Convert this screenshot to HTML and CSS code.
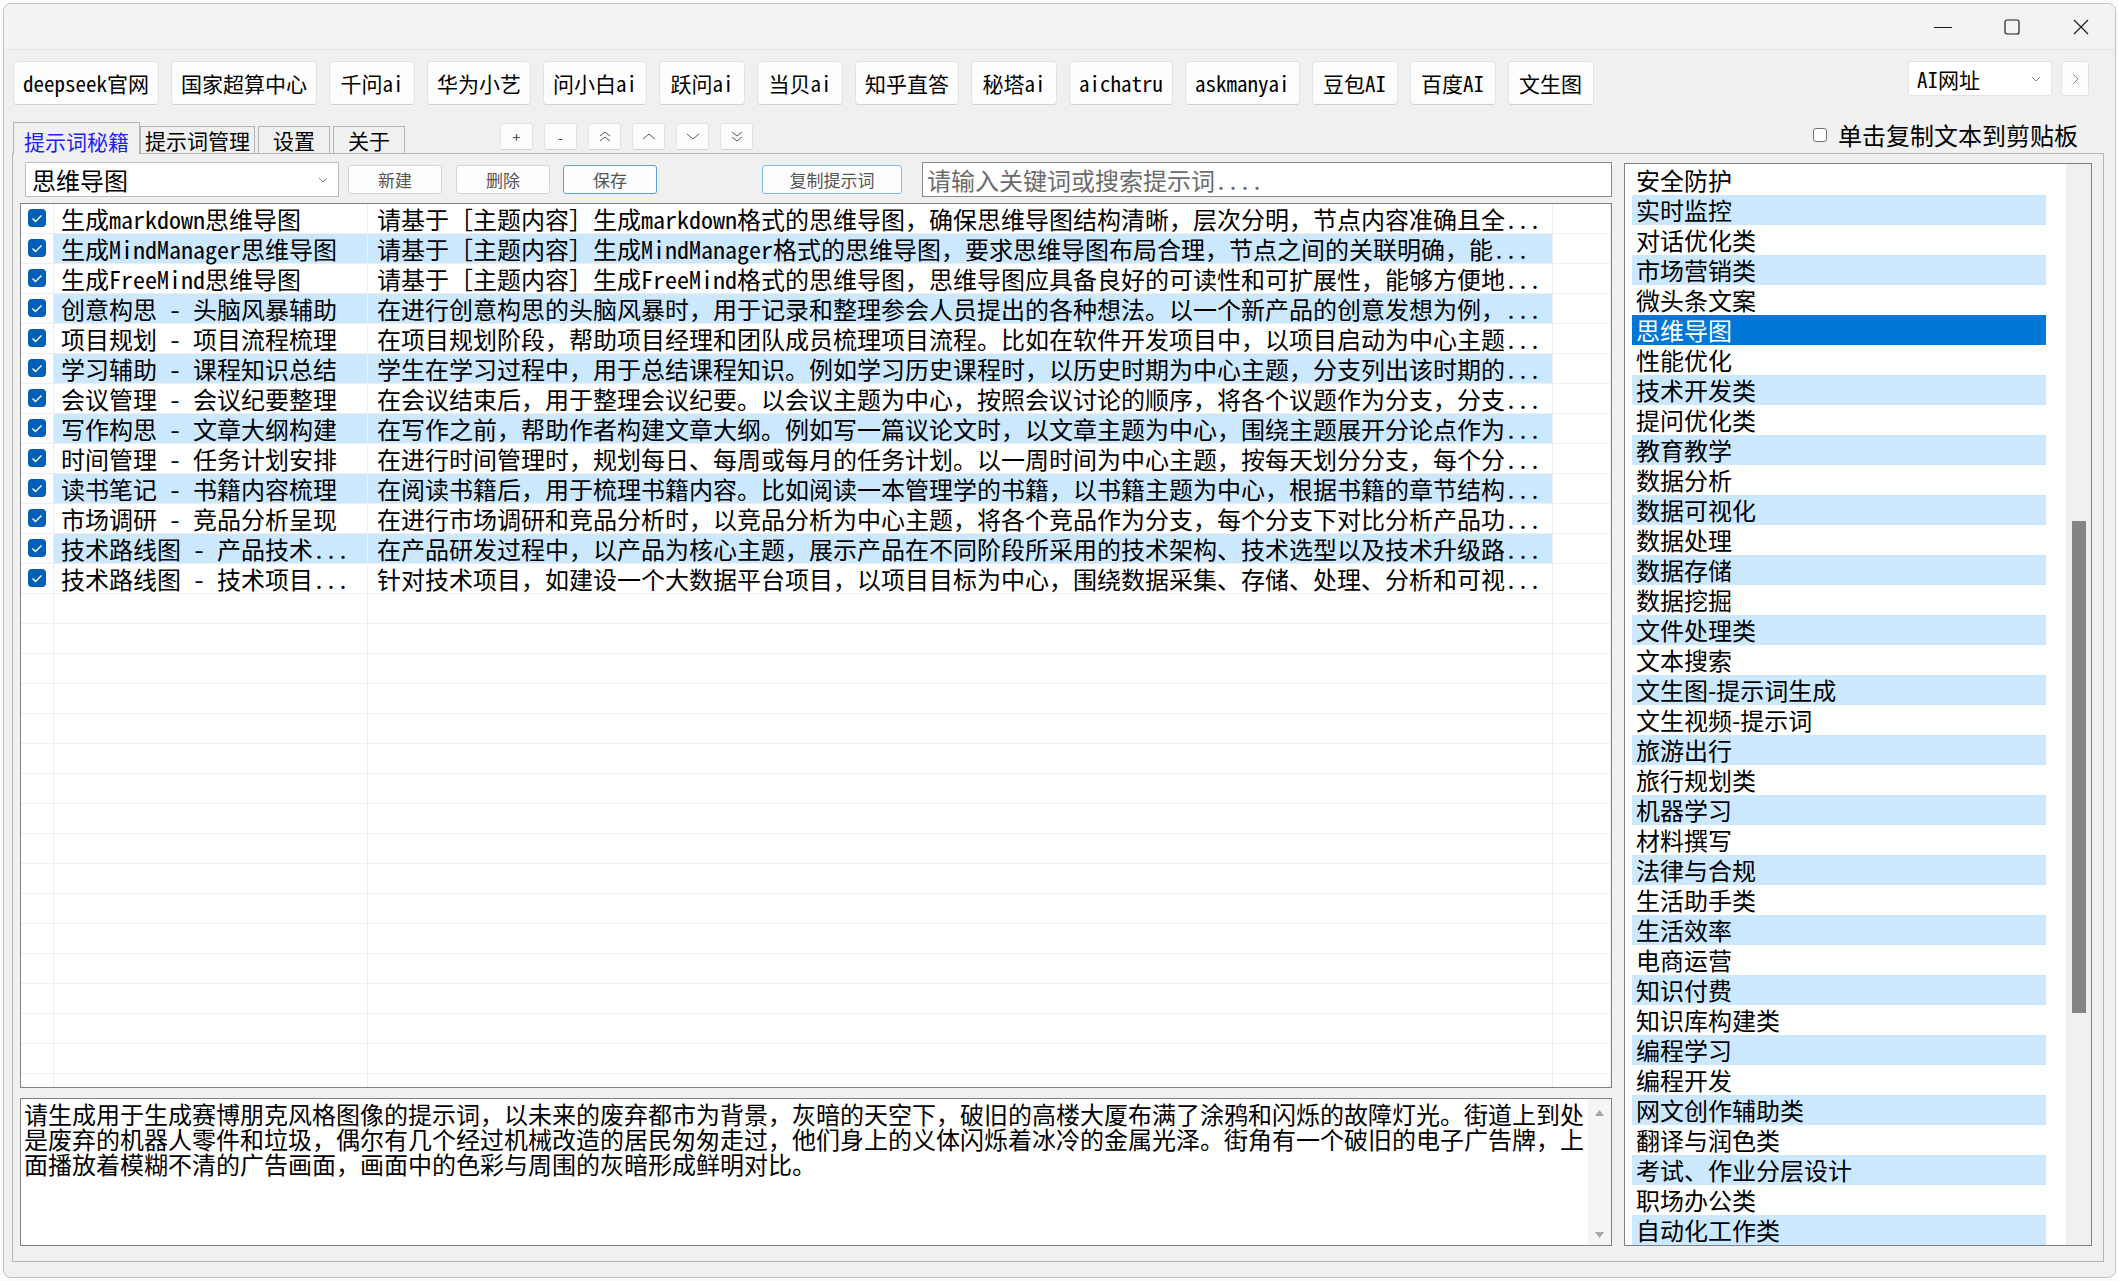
FILE: index.html
```html
<!DOCTYPE html>
<html lang="zh-CN">
<head>
    <meta charset="UTF-8">
    <meta name="viewport" content="width=device-width, initial-scale=1.0">
    <title>提示词秘籍</title>
    <link rel="stylesheet" href="styles.css">
</head>
<body>

<div class="window">

    <div class="titlebar">
        <span class="ctl"><svg width="20" height="16" viewBox="0 0 20 16"><line x1="1" y1="8.5" x2="19" y2="8.5" stroke="#1b1b1b" stroke-width="1.2"/></svg></span>
        <span class="ctl"><svg width="16" height="16" viewBox="0 0 16 16"><rect x="1" y="1" width="14" height="14" rx="2" fill="none" stroke="#1b1b1b" stroke-width="1.2"/></svg></span>
        <span class="ctl"><svg width="16" height="16" viewBox="0 0 16 16"><path d="M1 1L15 15M15 1L1 15" stroke="#1b1b1b" stroke-width="1.2"/></svg></span>
    </div>

    <div class="content">

        <div class="linkbar">
            <button class="site">deepseek官网</button>
            <button class="site">国家超算中心</button>
            <button class="site">千问ai</button>
            <button class="site">华为小艺</button>
            <button class="site">问小白ai</button>
            <button class="site">跃问ai</button>
            <button class="site">当贝ai</button>
            <button class="site">知乎直答</button>
            <button class="site">秘塔ai</button>
            <button class="site">aichatru</button>
            <button class="site">askmanyai</button>
            <button class="site">豆包AI</button>
            <button class="site">百度AI</button>
            <button class="site">文生图</button>

            <div class="site-pick">
                <div class="site-select">
                    <span>AI网址</span>
                    <svg width="10" height="6" viewBox="0 0 10 6"><path d="M1 1L5 5L9 1" fill="none" stroke="#8a8a8a"/></svg>
                </div>
                <button class="go"><svg width="7" height="12" viewBox="0 0 7 12"><path d="M1 1L6 6L1 11" fill="none" stroke="#8a8a8a"/></svg></button>
            </div>
        </div>

        <div class="tabrow">
            <div class="tabs">
                <span class="tab active">提示词秘籍</span>
                <span class="tab wide">提示词管理</span>
                <span class="tab">设置</span>
                <span class="tab">关于</span>
            </div>

            <div class="movebtns">
                <button class="mv">+</button>
                <button class="mv">-</button>
                <button class="mv"><svg width="12" height="11" viewBox="0 0 12 11"><path d="M1 5L6 1L11 5M1 10L6 6L11 10" fill="none" stroke="#555"/></svg></button>
                <button class="mv"><svg width="14" height="7" viewBox="0 0 14 7"><path d="M1 6L7 1L13 6" fill="none" stroke="#555"/></svg></button>
                <button class="mv"><svg width="14" height="7" viewBox="0 0 14 7"><path d="M1 1L7 6L13 1" fill="none" stroke="#555"/></svg></button>
                <button class="mv"><svg width="12" height="11" viewBox="0 0 12 11"><path d="M1 1L6 5L11 1M1 6L6 10L11 6" fill="none" stroke="#555"/></svg></button>
            </div>

            <label class="copyopt"><span class="tick"></span>单击复制文本到剪贴板</label>
        </div>

        <div class="panel">

            <div class="leftcol">
                <div class="toolrow">
                    <div class="combo">
                        <span>思维导图</span>
                        <svg width="10" height="6" viewBox="0 0 10 6"><path d="M1 1L5 5L9 1" fill="none" stroke="#8a8a8a"/></svg>
                    </div>
                    <button class="btn b-new">新建</button>
                    <button class="btn b-del">删除</button>
                    <button class="btn b-save">保存</button>
                    <button class="btn b-copy">复制提示词</button>
                    <input class="search" type="text" placeholder="请输入关键词或搜索提示词....">
                </div>

                <div class="grid">
                    <table>
                        <colgroup>
                            <col style="width:33px">
                            <col style="width:314px">
                            <col style="width:1185px">
                            <col>
                        </colgroup>
                        <tr><td class="c"><span class="chk"></span></td><td class="name">生成markdown思维导图</td><td class="text">请基于［主题内容］生成<span class="lat">markdown</span>格式的思维导图，确保思维导图结构清晰，层次分明，节点内容准确且全<span class="lat">...</span></td><td></td></tr>
                        <tr class="alt"><td class="c"><span class="chk"></span></td><td class="name">生成MindManager思维导图</td><td class="text">请基于［主题内容］生成<span class="lat">MindManager</span>格式的思维导图，要求思维导图布局合理，节点之间的关联明确，能<span class="lat">...</span></td><td></td></tr>
                        <tr><td class="c"><span class="chk"></span></td><td class="name">生成FreeMind思维导图</td><td class="text">请基于［主题内容］生成<span class="lat">FreeMind</span>格式的思维导图，思维导图应具备良好的可读性和可扩展性，能够方便地<span class="lat">...</span></td><td></td></tr>
                        <tr class="alt"><td class="c"><span class="chk"></span></td><td class="name">创意构思 - 头脑风暴辅助</td><td class="text">在进行创意构思的头脑风暴时，用于记录和整理参会人员提出的各种想法。以一个新产品的创意发想为例，<span class="lat">...</span></td><td></td></tr>
                        <tr><td class="c"><span class="chk"></span></td><td class="name">项目规划 - 项目流程梳理</td><td class="text">在项目规划阶段，帮助项目经理和团队成员梳理项目流程。比如在软件开发项目中，以项目启动为中心主题<span class="lat">...</span></td><td></td></tr>
                        <tr class="alt"><td class="c"><span class="chk"></span></td><td class="name">学习辅助 - 课程知识总结</td><td class="text">学生在学习过程中，用于总结课程知识。例如学习历史课程时，以历史时期为中心主题，分支列出该时期的<span class="lat">...</span></td><td></td></tr>
                        <tr><td class="c"><span class="chk"></span></td><td class="name">会议管理 - 会议纪要整理</td><td class="text">在会议结束后，用于整理会议纪要。以会议主题为中心，按照会议讨论的顺序，将各个议题作为分支，分支<span class="lat">...</span></td><td></td></tr>
                        <tr class="alt"><td class="c"><span class="chk"></span></td><td class="name">写作构思 - 文章大纲构建</td><td class="text">在写作之前，帮助作者构建文章大纲。例如写一篇议论文时，以文章主题为中心，围绕主题展开分论点作为<span class="lat">...</span></td><td></td></tr>
                        <tr><td class="c"><span class="chk"></span></td><td class="name">时间管理 - 任务计划安排</td><td class="text">在进行时间管理时，规划每日、每周或每月的任务计划。以一周时间为中心主题，按每天划分分支，每个分<span class="lat">...</span></td><td></td></tr>
                        <tr class="alt"><td class="c"><span class="chk"></span></td><td class="name">读书笔记 - 书籍内容梳理</td><td class="text">在阅读书籍后，用于梳理书籍内容。比如阅读一本管理学的书籍，以书籍主题为中心，根据书籍的章节结构<span class="lat">...</span></td><td></td></tr>
                        <tr><td class="c"><span class="chk"></span></td><td class="name">市场调研 - 竞品分析呈现</td><td class="text">在进行市场调研和竞品分析时，以竞品分析为中心主题，将各个竞品作为分支，每个分支下对比分析产品功<span class="lat">...</span></td><td></td></tr>
                        <tr class="alt"><td class="c"><span class="chk"></span></td><td class="name">技术路线图 - 产品技术...</td><td class="text">在产品研发过程中，以产品为核心主题，展示产品在不同阶段所采用的技术架构、技术选型以及技术升级路<span class="lat">...</span></td><td></td></tr>
                        <tr><td class="c"><span class="chk"></span></td><td class="name">技术路线图 - 技术项目...</td><td class="text">针对技术项目，如建设一个大数据平台项目，以项目目标为中心，围绕数据采集、存储、处理、分析和可视<span class="lat">...</span></td><td></td></tr>
                        <!-- empty rows -->
                        <tr><td></td><td></td><td></td><td></td></tr>
                        <tr><td></td><td></td><td></td><td></td></tr>
                        <tr><td></td><td></td><td></td><td></td></tr>
                        <tr><td></td><td></td><td></td><td></td></tr>
                        <tr><td></td><td></td><td></td><td></td></tr>
                        <tr><td></td><td></td><td></td><td></td></tr>
                        <tr><td></td><td></td><td></td><td></td></tr>
                        <tr><td></td><td></td><td></td><td></td></tr>
                        <tr><td></td><td></td><td></td><td></td></tr>
                        <tr><td></td><td></td><td></td><td></td></tr>
                        <tr><td></td><td></td><td></td><td></td></tr>
                        <tr><td></td><td></td><td></td><td></td></tr>
                        <tr><td></td><td></td><td></td><td></td></tr>
                        <tr><td></td><td></td><td></td><td></td></tr>
                        <tr><td></td><td></td><td></td><td></td></tr>
                        <tr><td></td><td></td><td></td><td></td></tr>
                        <tr><td></td><td></td><td></td><td></td></tr>
                    </table>
                </div>

                <div class="editor">
                    <div class="editor-text">请生成用于生成赛博朋克风格图像的提示词，以未来的废弃都市为背景，灰暗的天空下，破旧的高楼大厦布满了涂鸦和闪烁的故障灯光。街道上到处<br>是废弃的机器人零件和垃圾，偶尔有几个经过机械改造的居民匆匆走过，他们身上的义体闪烁着冰冷的金属光泽。街角有一个破旧的电子广告牌，上<br>面播放着模糊不清的广告画面，画面中的色彩与周围的灰暗形成鲜明对比。</div>
                    <div class="vscroll">
                        <svg width="9" height="6" viewBox="0 0 9 6"><path d="M0 6L4.5 0L9 6Z" fill="#a6a6a6"/></svg>
                        <svg width="9" height="6" viewBox="0 0 9 6"><path d="M0 0L4.5 6L9 0Z" fill="#a6a6a6"/></svg>
                    </div>
                </div>
            </div>

            <div class="catlist">
                <ul>
                    <li>安全防护</li>
                    <li class="alt">实时监控</li>
                    <li>对话优化类</li>
                    <li class="alt">市场营销类</li>
                    <li>微头条文案</li>
                    <li class="sel">思维导图</li>
                    <li>性能优化</li>
                    <li class="alt">技术开发类</li>
                    <li>提问优化类</li>
                    <li class="alt">教育教学</li>
                    <li>数据分析</li>
                    <li class="alt">数据可视化</li>
                    <li>数据处理</li>
                    <li class="alt">数据存储</li>
                    <li>数据挖掘</li>
                    <li class="alt">文件处理类</li>
                    <li>文本搜索</li>
                    <li class="alt">文生图-提示词生成</li>
                    <li>文生视频-提示词</li>
                    <li class="alt">旅游出行</li>
                    <li>旅行规划类</li>
                    <li class="alt">机器学习</li>
                    <li>材料撰写</li>
                    <li class="alt">法律与合规</li>
                    <li>生活助手类</li>
                    <li class="alt">生活效率</li>
                    <li>电商运营</li>
                    <li class="alt">知识付费</li>
                    <li>知识库构建类</li>
                    <li class="alt">编程学习</li>
                    <li>编程开发</li>
                    <li class="alt">网文创作辅助类</li>
                    <li>翻译与润色类</li>
                    <li class="alt">考试、作业分层设计</li>
                    <li>职场办公类</li>
                    <li class="alt">自动化工作类</li>
                </ul>
                <div class="lscroll"><div class="thumb"></div></div>
            </div>

        </div>
    </div>
</div>

</body>
</html>
```

FILE: styles.css
```css
*{
    margin: 0;
    padding: 0;
    box-sizing: border-box;
}
body{
    background-color: #fbfbfb;
    font-family: "Noto Sans CJK SC", "Noto Sans", sans-serif;
    color: #000;
}
button, input{
    font: inherit;
    color: inherit;
}
/* half-width latin, like the old windows cjk fonts */
.lat, .site, .site-select, .search, .grid td.name{
    font-feature-settings: "hwid" 1;
}

.window{
    width: 2113px;
    height: 1275px;
    margin: 3px 0 0 3px;
    border: 1px solid #c3c3c3;
    border-radius: 8px;
    background-color: #f0f0f0;
    display: flex;
    flex-direction: column;
    overflow: hidden;
}
.titlebar{
    height: 46px;
    flex-shrink: 0;
    background-color: #f3f3f3;
    border-bottom: 1px solid #e2e2e2;
    display: flex;
    justify-content: flex-end;
}
.ctl{
    width: 69px;
    display: flex;
    justify-content: center;
    align-items: center;
}
.content{
    flex: 1;
    display: flex;
    flex-direction: column;
    padding: 11px 11px 15px 8px;
}

/* site buttons */
.linkbar{
    display: flex;
    gap: 12px;
    height: 44px;
    padding: 0 15px 0 1px;
}
.site{
    height: 44px;
    min-width: 86px;
    padding: 0 9px;
    font-size: 21px;
    background-color: #fdfdfd;
    border: 1px solid #e3e3e3;
    border-bottom-color: #d0d0d0;
    border-radius: 4px;
    white-space: nowrap;
}
.site-pick{
    margin-left: auto;
    display: flex;
    gap: 9px;
    align-items: flex-start;
}
.site-select{
    width: 144px;
    height: 35px;
    padding: 0 10px 0 8px;
    display: flex;
    align-items: center;
    justify-content: space-between;
    font-size: 21px;
    background-color: #fff;
    border: 1px solid #e3e3e3;
    border-radius: 3px;
}
.go{
    width: 28px;
    height: 35px;
    display: flex;
    align-items: center;
    justify-content: center;
    background-color: #fdfdfd;
    border: 1px solid #e3e3e3;
    border-radius: 3px;
}

/* tabs row */
.tabrow{
    display: flex;
    align-items: flex-end;
    height: 31px;
    margin-top: 17px;
    padding-left: 1px;
}
.tabs{
    display: flex;
    align-items: flex-end;
}
.tab{
    height: 27px;
    padding: 0 14px;
    font-size: 21px;
    line-height: 26px;
    border: 1px solid #b4b4b4;
    border-bottom: none;
    background-color: #f0f0f0;
    white-space: nowrap;
}
.tab + .tab{
    margin-left: 3px;
}
.tab.wide{
    padding: 0 4px;
    margin-left: 0;
}
.tab.active{
    position: relative;
    z-index: 1;
    height: 32px;
    padding: 5px 10px 0;
    margin-bottom: -1px;
    color: #1f1ff0;
    background-color: #f0f0f0;
}
.movebtns{
    display: flex;
    gap: 11px;
    margin-left: 95px;
    align-self: flex-start;
    margin-top: 1px;
}
.mv{
    width: 33px;
    height: 27px;
    display: flex;
    align-items: center;
    justify-content: center;
    font-size: 14px;
    color: #444;
    background-color: #fdfdfd;
    border: 1px solid #e3e3e3;
    border-bottom-color: #d0d0d0;
    border-radius: 3px;
}
.copyopt{
    margin-left: auto;
    margin-right: 26px;
    align-self: flex-start;
    display: flex;
    align-items: center;
    gap: 11px;
    font-size: 24px;
    line-height: 26px;
}
.tick{
    width: 14px;
    height: 14px;
    border: 1px solid #707070;
    border-radius: 3px;
    background-color: #fff;
}

/* tab page */
.panel{
    flex: 1;
    display: flex;
    gap: 12px;
    padding: 8px 10px 15px 7px;
    border: 1px solid #b4b4b4;
    background-color: #f0f0f0;
}
.leftcol{
    width: 1592px;
    display: flex;
    flex-direction: column;
}
.toolrow{
    height: 35px;
    display: flex;
    align-items: center;
    padding-left: 5px;
}
.combo{
    width: 314px;
    height: 35px;
    padding: 0 10px 0 6px;
    display: flex;
    align-items: center;
    justify-content: space-between;
    font-size: 24px;
    background-color: #fff;
    border: 1px solid #bdbdbd;
}
.btn{
    width: 94px;
    height: 29px;
    font-size: 17px;
    color: #555;
    background-color: #fdfdfd;
    border: 1px solid #d6d6d6;
    border-radius: 3px;
}
.b-new{ margin-left: 9px; }
.b-del{ margin-left: 14px; }
.b-save{
    margin-left: 13px;
    border-color: #5f9fdc;
}
.b-copy{
    width: 140px;
    margin-left: 105px;
    border-color: #8ab8e6;
}
.search{
    flex: 1;
    height: 35px;
    margin-left: 20px;
    padding-left: 4px;
    font-size: 24px;
    background-color: #fff;
    border: 1px solid #8a8a8a;
    outline: none;
}
.search::placeholder{
    color: #6b6b6b;
}

/* prompt table */
.grid{
    height: 885px;
    margin-top: 6px;
    border: 1px solid #828282;
    background-color: #fff;
    overflow: hidden;
}
.grid table{
    width: 100%;
    table-layout: fixed;
    border-collapse: separate;
    border-spacing: 0;
}
.grid td{
    height: 30px;
    padding: 0;
    font-size: 24px;
    line-height: 29px;
    white-space: nowrap;
    border-right: 1px solid #efefef;
    border-bottom: 1px solid #efefef;
}
.grid td.c{
    text-align: center;
}
.grid td.name{
    padding-left: 7px;
}
.grid td.text{
    padding-left: 9px;
}
.grid tr.alt td.name,
.grid tr.alt td.text{
    background-color: #cce8ff;
}
.chk{
    display: inline-block;
    width: 18px;
    height: 18px;
    margin-top: 5px;
    vertical-align: top;
    border-radius: 4px;
    background-color: #005fb8;
    background-image: url("data:image/svg+xml,%3Csvg xmlns='http://www.w3.org/2000/svg' width='18' height='18'%3E%3Cpath d='M4.5 9.5l3 3L13.5 6.5' fill='none' stroke='white' stroke-width='1.4'/%3E%3C/svg%3E");
}

/* text box */
.editor{
    height: 148px;
    margin-top: 10px;
    display: flex;
    border: 1px solid #828282;
    background-color: #fff;
}
.editor-text{
    flex: 1;
    padding: 2px 0 0 3px;
    font-size: 24px;
    line-height: 25px;
    white-space: nowrap;
}
.vscroll{
    width: 23px;
    display: flex;
    flex-direction: column;
    align-items: center;
    justify-content: space-between;
    padding: 11px 0 7px;
    background-color: #f5f5f5;
}

/* category list */
.catlist{
    width: 468px;
    margin-top: 1px;
    display: flex;
    border: 1px solid #828282;
    background-color: #fff;
    overflow: hidden;
}
.catlist ul{
    flex: 1;
    list-style: none;
    padding: 1px 20px 0 7px;
}
.catlist li{
    height: 30px;
    padding-left: 4px;
    font-size: 24px;
    line-height: 30px;
    white-space: nowrap;
}
.catlist li.alt{
    background-color: #cce8ff;
}
.catlist li.sel{
    background-color: #0078d7;
    color: #fff;
}
.lscroll{
    width: 25px;
    padding: 357px 5px 0 6px;
    background-color: #f0f0f0;
}
.thumb{
    height: 492px;
    background-color: #858585;
}
```
